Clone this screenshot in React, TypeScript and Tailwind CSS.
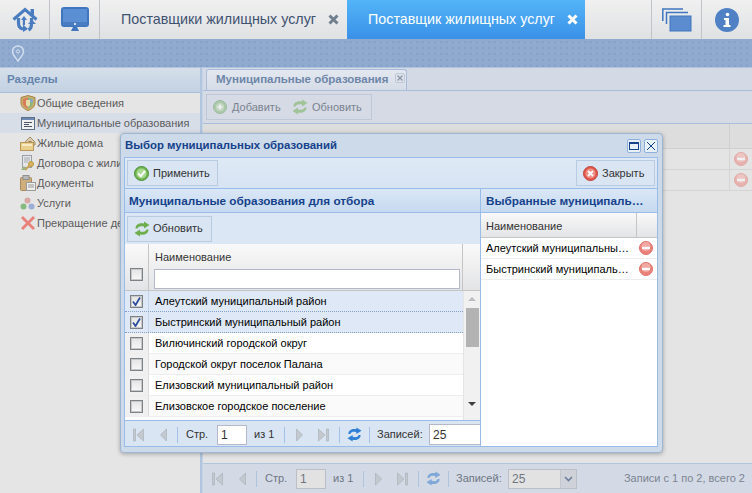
import type { ReactNode } from "react";

const FONT = "font-['Liberation_Sans',sans-serif]";

function HomeIcon() {
  return (
    <svg width="26" height="25" viewBox="0 0 26 25" fill="none">
      <path d="M1.5 12.5 L13 2.5 L24.5 12.5" stroke="#4a7cc0" strokeWidth="3" />
      <path d="M18.5 6 V2 H22 V9 Z" fill="#4a7cc0" />
      <path d="M6.5 11 V16 C6.5 19.5 8 21.5 11 22" stroke="#4a7cc0" strokeWidth="3.2" />
      <path d="M11 17.5 L16 22 L11 25 Z" fill="#4a7cc0" />
      <path d="M19.5 11 V17 C19.5 20 18.5 22 16.5 23" stroke="#4a7cc0" strokeWidth="3.2" />
      <path d="M15 13 L12 9 L9 13 H10.8 V18 H13 V13 Z" fill="#4a7cc0" />
      <path d="M16 17 L20 13 L24 17 Z" fill="#4a7cc0" />
    </svg>
  );
}

function MonitorIcon() {
  return (
    <svg width="28" height="25" viewBox="0 0 28 25">
      <rect x="1" y="1" width="26" height="18" rx="2" fill="#fff" stroke="#3f76bf" strokeWidth="2" />
      <rect x="2" y="2" width="24" height="13" fill="#5a8fd4" />
      <rect x="2" y="15" width="24" height="3.5" fill="#4a7cc0" />
      <circle cx="14" cy="17" r="1" fill="#fff" />
      <path d="M10 24 L12 20 H16 L18 24 Z" fill="#3f76bf" />
    </svg>
  );
}

function StackIcon() {
  return (
    <svg width="30" height="24" viewBox="0 0 30 24" fill="none">
      <path d="M0.8 13 V1 H21" stroke="#3f76bf" strokeWidth="1.5" />
      <path d="M4.5 16 V4.5 H26" stroke="#3f76bf" strokeWidth="1.5" />
      <rect x="8" y="8" width="21" height="15" fill="#5b8ccf" stroke="#3f76bf" />
    </svg>
  );
}

function InfoIcon() {
  return (
    <svg width="24" height="24" viewBox="0 0 24 24">
      <circle cx="12" cy="12" r="12" fill="#4f81c4" />
      <circle cx="12.5" cy="6.5" r="1.8" fill="#fff" />
      <path d="M9 10 H14 V17 H15.5 V19 H8.5 V17 H10.5 V12 H9 Z" fill="#fff" />
    </svg>
  );
}

function PinIcon() {
  return (
    <svg width="14" height="17" viewBox="0 0 14 17" fill="none">
      <path d="M7 16 C4 12 1.5 9.5 1.5 6.5 A5.5 5.5 0 0 1 12.5 6.5 C12.5 9.5 10 12 7 16 Z" stroke="#d3dfee" strokeWidth="1.5" />
      <circle cx="7" cy="6.5" r="1.6" stroke="#d3dfee" />
    </svg>
  );
}

function TabCross({ color }: { color: string }) {
  return (
    <svg width="11" height="11" viewBox="0 0 11 11" fill="none">
      <path d="M1.5 1.5 L9.5 9.5 M9.5 1.5 L1.5 9.5" stroke={color} strokeWidth="3" />
    </svg>
  );
}

function ShieldIcon() {
  return (
    <svg width="16" height="16" viewBox="0 0 16 16">
      <path d="M8 0.5 L15 2.5 V8 C15 12 11 14.5 8 15.5 C5 14.5 1 12 1 8 V2.5 Z" fill="#c9b06a" stroke="#a5824a" />
      <path d="M8 2.5 V13.5 C5.5 12.5 3 11 3 8 V4 Z" fill="#d97a5a" />
      <path d="M8 2.5 L13 4 V8 C13 11 10.5 12.5 8 13.5 Z" fill="#8fb37f" />
      <path d="M6 5 H10 V10 L8 12 L6 10 Z" fill="#e4dfa8" />
      <path d="M10 4 L13 4.5 V7 L10 7 Z" fill="#8aa5cf" />
    </svg>
  );
}

function ListIcon() {
  return (
    <svg width="14" height="13" viewBox="0 0 14 13" fill="none">
      <rect x="0.5" y="0.5" width="13" height="12" fill="#f0f0f0" stroke="#5f6f86" />
      <rect x="1" y="1" width="12" height="2" fill="#6d89b3" />
      <path d="M3 5.5 H11 M3 7.5 H8 M3 9.5 H11" stroke="#4b5563" />
    </svg>
  );
}

function HouseFolderIcon() {
  return (
    <svg width="16" height="15" viewBox="0 0 16 15">
      <path d="M5 6 L10 1 L15 6 V9 H5 Z" fill="#d8cdb4" stroke="#a98f5e" />
      <rect x="8.5" y="5" width="3" height="4" fill="#a07f56" />
      <rect x="0.5" y="6.5" width="13" height="8" fill="#e9d08c" stroke="#b9975a" />
      <rect x="2" y="8" width="10" height="2" fill="#f6ebc4" />
    </svg>
  );
}

function ContractIcon() {
  return (
    <svg width="16" height="16" viewBox="0 0 16 16">
      <rect x="2.5" y="0.5" width="9" height="12" fill="#e6e6e6" stroke="#9aa0aa" />
      <path d="M4 3 H10 M4 5 H10 M4 7 H8" stroke="#a3a9b3" />
      <circle cx="11" cy="9" r="2.5" fill="#d9b65e" stroke="#b9974a" />
      <path d="M10 10 L5 15" stroke="#c9a552" strokeWidth="2" />
      <path d="M1 15 L4 11 L6 15 Z" fill="#9bb57f" />
    </svg>
  );
}

function ClipboardIcon() {
  return (
    <svg width="16" height="16" viewBox="0 0 16 16">
      <rect x="0.5" y="2.5" width="11" height="13" rx="1" fill="#cfae7c" stroke="#a98a5a" />
      <rect x="3" y="0.5" width="6" height="4" fill="#b9b9b9" stroke="#8f8f8f" />
      <rect x="6.5" y="7.5" width="9" height="8" fill="#eeeeee" stroke="#9a9a9a" />
      <path d="M8 10 H14 M8 12 H14" stroke="#9a9a9a" />
    </svg>
  );
}

function ServicesIcon() {
  return (
    <svg width="15" height="13" viewBox="0 0 15 13">
      <circle cx="7.5" cy="3.5" r="3" fill="#d9a8a4" />
      <circle cx="3.5" cy="9.5" r="3" fill="#86bb80" />
      <circle cx="11.5" cy="9.5" r="3" fill="#9daed6" />
    </svg>
  );
}

function CrossIcon() {
  return (
    <svg width="14" height="14" viewBox="0 0 14 14">
      <path d="M2 0 L7 5 L12 0 L14 2 L9 7 L14 12 L12 14 L7 9 L2 14 L0 12 L5 7 L0 2 Z" fill="#e8817a" />
    </svg>
  );
}

function AddIcon() {
  return (
    <svg width="14" height="14" viewBox="0 0 14 14" className="opacity-60">
      <circle cx="7" cy="7" r="6.5" fill="#8fbf83" stroke="#7ba572" />
      <circle cx="7" cy="7" r="4" fill="#b9d6ae" />
      <path d="M4.5 7 H9.5 M7 4.5 V9.5" stroke="#fff" strokeWidth="1.6" />
    </svg>
  );
}

function RefreshIcon({ faded }: { faded?: boolean }) {
  return (
    <svg width="16" height="16" viewBox="0 0 16 16" className={faded ? "opacity-50" : ""} fill="#6fae4f">
      <path d="M1.5 7.5 C1.5 3 6 1.5 10 2.5 V0.5 L15.5 4 L10 7.5 V5.5 C7 4.8 4.5 5 3.5 7.5 Z" />
      <path d="M14.5 8.5 C14.5 13 10 14.5 6 13.5 V15.5 L0.5 12 L6 8.5 V10.5 C9 11.2 11.5 11 12.5 8.5 Z" />
    </svg>
  );
}

function ApplyIcon() {
  return (
    <svg width="15" height="15" viewBox="0 0 15 15">
      <circle cx="7.5" cy="7.5" r="7" fill="#6fb552" stroke="#4f8f3a" />
      <circle cx="7.5" cy="7.5" r="5" fill="#a8d98f" />
      <path d="M4.2 7.5 L6.8 10 L11 5" fill="none" stroke="#fff" strokeWidth="2" />
    </svg>
  );
}

function CloseRoundIcon() {
  return (
    <svg width="15" height="15" viewBox="0 0 15 15">
      <circle cx="7.5" cy="7.5" r="7" fill="#e2574c" stroke="#c0443a" />
      <circle cx="7.5" cy="7.5" r="5" fill="#ef8f85" />
      <path d="M5 5 L10 10 M10 5 L5 10" stroke="#fff" strokeWidth="1.8" />
    </svg>
  );
}

function RemoveIcon({ faded }: { faded?: boolean }) {
  return (
    <svg width="14" height="14" viewBox="0 0 14 14" className={faded ? "opacity-50" : ""}>
      <circle cx="7" cy="7" r="6.5" fill="#e98079" stroke="#e0716a" />
      <circle cx="7" cy="5.5" r="4.5" fill="#f3a9a3" />
      <rect x="3" y="5.8" width="8" height="2.4" fill="#fff" />
    </svg>
  );
}

function CheckBox({ checked }: { checked?: boolean }) {
  return (
    <span className="flex h-[13px] w-[13px] items-center justify-center border border-[#7d8286] bg-[linear-gradient(#e4e4e4,#f8f8f8)] outline outline-1 -outline-offset-2 outline-[#c8c8c8]">
      {checked && (
        <svg width="11" height="11" viewBox="0 0 11 11" fill="none">
          <path d="M2 5.5 L4.5 9 L9 1.5" stroke="#2f4f9f" strokeWidth="1.8" />
        </svg>
      )}
    </span>
  );
}

function PagerGlyph({ kind }: { kind: "first" | "prev" | "next" | "last" }) {
  const wide = kind === "first" || kind === "last";
  const paths = {
    first: "M0.5 1 H2.5 V13 H0.5 Z M10.5 1 L4 7 L10.5 13 Z",
    prev: "M6.5 1 L0.5 7 L6.5 13 Z",
    next: "M0.5 1 L6.5 7 L0.5 13 Z",
    last: "M0.5 1 L7 7 L0.5 13 Z M8.5 1 H10.5 V13 H8.5 Z",
  };
  return (
    <svg width={wide ? 11 : 7} height="14" viewBox={`0 0 ${wide ? 11 : 7} 14`} className="shrink-0">
      <path d={paths[kind]} fill="#c4c9cf" stroke="#a4abb3" strokeWidth="0.6" />
    </svg>
  );
}

function Sep({ color }: { color: string }) {
  return <span className={`h-[16px] w-px shrink-0 ${color}`} />;
}

function Pager({ faded, children }: { faded?: boolean; children: ReactNode }) {
  const sep = faded ? "bg-[#aec3de]" : "bg-[#a3c0e6]";
  const text = faded ? "text-[#6e7682]" : "text-[#333]";
  const field = faded ? "bg-[#e2e2e2] border-[#bcc0c6]" : "bg-white border-[#b5b8c8]";
  return (
    <div className={`flex h-full items-center text-[11px] ${faded ? "pl-[9px]" : "pl-[8px]"} ${text}`}>
      <PagerGlyph kind="first" />
      <span className="w-[16px] shrink-0" />
      <PagerGlyph kind="prev" />
      <span className="w-[10px] shrink-0" />
      <Sep color={sep} />
      <span className="ml-[8px] w-[31px] shrink-0">Стр.</span>
      <span className={`flex h-[20px] w-[30px] shrink-0 items-center border pl-[3px] text-[12px] ${field}`}>1</span>
      <span className="ml-[7px] w-[30px] shrink-0">из 1</span>
      <Sep color={sep} />
      <span className="w-[11px] shrink-0" />
      <PagerGlyph kind="next" />
      <span className="w-[15px] shrink-0" />
      <PagerGlyph kind="last" />
      <span className="w-[10px] shrink-0" />
      <Sep color={sep} />
      <span className="w-[7px] shrink-0" />
      <svg width="15" height="15" viewBox="0 0 16 16" fill={faded ? "#7fa8d8" : "#2f7fd6"} className="shrink-0">
        <path d="M1.5 7.5 C1.5 3 6 1.5 10 2.5 V0.5 L15.5 4 L10 7.5 V5.5 C7 4.8 4.5 5 3.5 7.5 Z" />
        <path d="M14.5 8.5 C14.5 13 10 14.5 6 13.5 V15.5 L0.5 12 L6 8.5 V10.5 C9 11.2 11.5 11 12.5 8.5 Z" />
      </svg>
      <span className="w-[7px] shrink-0" />
      <Sep color={sep} />
      <span className="ml-[7px] w-[52px] shrink-0 whitespace-nowrap">Записей:</span>
      {children}
    </div>
  );
}

function TopCell({ children, w }: { children: ReactNode; w: string }) {
  return (
    <div className={`flex h-full items-center justify-center border-r border-[#c0c4c9] ${w}`}>{children}</div>
  );
}

function ToolButton({ icon, label, w }: { icon: ReactNode; label: string; w: string }) {
  return (
    <div className={`flex h-[26px] items-center gap-[3px] border border-[#b9cbe0] bg-[#d9e5f3] pl-[6px] text-[11px] text-[#333] ${w}`}>
      {icon}
      {label}
    </div>
  );
}

const SECTIONS = [
  { icon: <ShieldIcon />, label: "Общие сведения" },
  { icon: <ListIcon />, label: "Муниципальные образования", active: true },
  { icon: <HouseFolderIcon />, label: "Жилые дома" },
  { icon: <ContractIcon />, label: "Договора с жилищными" },
  { icon: <ClipboardIcon />, label: "Документы" },
  { icon: <ServicesIcon />, label: "Услуги" },
  { icon: <CrossIcon />, label: "Прекращение деятельности" },
];

const RECORDS = [
  { name: "Алеутский муниципальный район", checked: true },
  { name: "Быстринский муниципальный район", checked: true },
  { name: "Вилючинский городской округ" },
  { name: "Городской округ поселок Палана" },
  { name: "Елизовский муниципальный район" },
  { name: "Елизовское городское поселение" },
];

function PickerWindow() {
  return (
    <div className="absolute left-[120px] top-[133px] flex h-[320px] w-[543px] flex-col rounded-[4px] border border-[#9fb6d3] bg-[#cddaea] pb-[5px] pl-[3px] pr-[4px] shadow-[0_1px_4px_rgba(60,60,60,0.4)]">
      <div className="flex h-[23px] shrink-0 items-center justify-between">
        <span className="pl-[1px] text-[11.4px] font-bold text-[#15428b]">Выбор муниципальных образований</span>
        <div className="flex gap-[3px]">
          <span className="flex h-[14px] w-[14px] items-center justify-center rounded-[2px] border border-[#8fb0dc] bg-[#e8f0fa]">
            <span className="h-[8px] w-[10px] border border-t-2 border-[#15428b]" />
          </span>
          <span className="flex h-[14px] w-[14px] items-center justify-center rounded-[2px] border border-[#8fb0dc] bg-[#e8f0fa]">
            <svg width="10" height="10" viewBox="0 0 10 10" fill="none">
              <path d="M1 1 L9 9 M9 1 L1 9" stroke="#15428b" />
            </svg>
          </span>
        </div>
      </div>
      <div className="flex min-h-0 flex-1 flex-col border border-[#99bce8] bg-[#dce7f5]">
        <div className="flex h-[31px] shrink-0 items-center justify-between border-b border-[#99bce8] bg-[linear-gradient(#dfe9f6,#d6e3f2)] pl-[2px] pr-[2px]">
          <ToolButton icon={<ApplyIcon />} label="Применить" w="w-[91px] !gap-[4px]" />
          <ToolButton icon={<CloseRoundIcon />} label="Закрыть" w="w-[79px] !gap-[4px]" />
        </div>
        <div className="flex min-h-0 flex-1">
          <div className="flex w-[355px] shrink-0 flex-col overflow-hidden">
            <div className="flex h-[24px] shrink-0 items-center border-b border-[#99bce8] bg-[linear-gradient(#dae7f6_0%,#d0e0f3_50%,#c6d9f0_100%)] pl-[4px] text-[11.75px] font-bold text-[#15428b]">
              Муниципальные образования для отбора
            </div>
            <div className="flex h-[31px] shrink-0 items-center bg-[#dce7f5] px-[2px]">
              <ToolButton icon={<RefreshIcon />} label="Обновить" w="w-[85px] pl-[5px]" />
            </div>
            <div className="flex h-[47px] shrink-0 border-b border-[#c5c5c5] bg-[linear-gradient(#f9f9f9,#e3e4e6)]">
              <div className="flex w-[24px] items-end justify-center border-r border-[#c5c5c5] pb-[9px]">
                <CheckBox />
              </div>
              <div className="flex flex-1 flex-col border-r border-[#c5c5c5] pl-[6px] pr-[2px]">
                <span className="flex h-[25px] items-center pt-[2px] text-[11px] text-[#333]">Наименование</span>
                <span className="-ml-[1px] h-[20px] border border-[#b5b8c8] bg-white" />
              </div>
              <div className="w-[17px]" />
            </div>
            <div className="flex h-[129px] shrink-0 bg-white">
              <div className="min-w-0 flex-1">
                {RECORDS.map((row, i) => (
                  <div
                    key={row.name}
                    className={`flex h-[21px] items-center border-b text-[11px] text-black ${
                      row.checked
                        ? "border-dotted border-[#84a0c4] bg-[#dfe8f6]"
                        : `border-[#ededed] ${i % 2 ? "bg-[#fafafa]" : "bg-white"}`
                    }`}
                  >
                    <span className={`flex h-full w-[24px] items-center justify-center border-r ${row.checked ? "border-[#c3d5ec]" : "border-[#dcdcdc] bg-[#f0f0f0]"}`}>
                      <CheckBox checked={row.checked} />
                    </span>
                    <span className="pl-[6px]">{row.name}</span>
                  </div>
                ))}
              </div>
              <div className="flex w-[17px] flex-col items-center border-l border-[#e4e4e4] bg-[#f1f1f1]">
                <span className="mt-[6px] h-0 w-0 border-x-[4px] border-b-[4px] border-x-transparent border-b-[#b9bcc0]" />
                <span className="mt-[7px] h-[39px] w-[13px] bg-[#b3b3b3]" />
                <span className="mt-[55px] h-0 w-0 border-x-[4px] border-t-[4px] border-x-transparent border-t-[#3f3f3f]" />
              </div>
            </div>
            <div className="h-[28px] shrink-0 border-t border-[#99bce8] bg-[#d9e5f3]">
              <Pager>
                <span className="flex h-[21px] w-[60px] shrink-0 items-center border border-[#b5b8c8] bg-white pl-[3px] text-[12px] text-[#333]">25</span>
              </Pager>
            </div>
          </div>
          <div className="flex min-w-0 flex-1 flex-col border-l border-[#99bce8] bg-white">
            <div className="flex h-[24px] shrink-0 items-center border-b border-[#99bce8] bg-[linear-gradient(#dae7f6_0%,#d0e0f3_50%,#c6d9f0_100%)] pl-[5px] text-[11.75px] font-bold text-[#15428b]">
              <span className="w-[160px] truncate">Выбранные муниципальные</span>
            </div>
            <div className="flex h-[25px] shrink-0 border-b border-[#c5c5c5] bg-[linear-gradient(#f9f9f9,#e3e4e6)] text-[11px] text-[#333]">
              <span className="flex flex-1 items-center border-r border-[#c5c5c5] pl-[5px] pt-[2px]">Наименование</span>
              <span className="w-[20px]" />
            </div>
            {["Алеутский муниципальный район", "Быстринский муниципальный район"].map((name) => (
              <div key={name} className="flex h-[21px] shrink-0 items-center border-b border-[#ededed] text-[11px] text-black">
                <span className="min-w-0 flex-1 truncate pl-[5px] pr-[5px]">{name}</span>
                <span className="flex w-[22px] justify-center">
                  <RemoveIcon />
                </span>
              </div>
            ))}
          </div>
        </div>
      </div>
    </div>
  );
}

export default function App() {
  return (
    <div className={`relative flex h-[493px] w-[752px] flex-col overflow-hidden bg-[#e4e4e4] ${FONT}`}>
      <header className="flex h-[39px] shrink-0 items-stretch bg-[linear-gradient(#f0f0f0,#dfe1e3)] shadow-[0_1px_2px_rgba(50,60,80,0.6)]">
        <TopCell w="w-[50px]">
          <HomeIcon />
        </TopCell>
        <TopCell w="w-[50px]">
          <MonitorIcon />
        </TopCell>
        <div className="flex w-[247px] items-center pl-[21px] text-[14.3px] text-[#3f5270]">
          <span className="w-[207px] whitespace-nowrap">Поставщики жилищных услуг</span>
          <TabCross color="#70808f" />
        </div>
        <div className="flex w-[238px] items-center bg-[linear-gradient(#53b4f8,#3a91e8)] pl-[21px] text-[14.3px] text-white">
          <span className="w-[199px] whitespace-nowrap">Поставщик жилищных услуг</span>
          <TabCross color="#ffffff" />
        </div>
        <div className="flex-1 border-r border-[#c0c4c9]" />
        <TopCell w="w-[50px]">
          <StackIcon />
        </TopCell>
        <div className="flex w-[50px] items-center justify-center">
          <InfoIcon />
        </div>
      </header>

      <div className="flex h-[28px] shrink-0 items-center bg-[#8fa9cf] bg-[radial-gradient(#86a1c9_1px,transparent_1px)] bg-[length:6px_6px] pl-[11px]">
        <PinIcon />
      </div>

      <div className="flex min-h-0 flex-1 border-t border-[#b0c4de] bg-[#c5d5e8]">
        <aside className="w-[201px] shrink-0 overflow-hidden border-r border-[#b2c5de] bg-[#e5e5e5]">
          <div className="flex h-[25px] items-center border-b border-[#a8bfdc] bg-[linear-gradient(#d4dfea,#c3d1e2)] pl-[7px] text-[11.5px] font-bold text-[#6584ad]">
            Разделы
          </div>
          {SECTIONS.map((item) => (
            <div
              key={item.label}
              className={`flex h-[20px] items-center whitespace-nowrap pl-[19px] text-[11px] text-[#5b5b5b] ${item.active ? "bg-[#d8dee8]" : ""}`}
            >
              <span className="flex w-[17px] shrink-0 justify-center">{item.icon}</span>
              <span className="pl-[1px]">{item.label}</span>
            </div>
          ))}
        </aside>

        <main className="flex min-w-0 flex-1 flex-col border-l border-[#b2c5de] pl-[1px]">
          <div className="flex h-[23px] shrink-0 items-end border-b border-[#a9bddb] bg-[#d3dae6] pl-[3px]">
            <div className="flex h-[21px] w-[201px] items-center justify-between whitespace-nowrap rounded-t-[3px] border border-b-0 border-[#a9bddb] bg-[linear-gradient(#e3e8f0,#d6dce7)] pl-[9px] pr-[1px] text-[11.5px] font-bold text-[#6e86a8]">
              Муниципальные образования
              <span className="mb-[5px] flex h-[10px] w-[10px] items-center justify-center rounded-[2px] border border-[#c0c8d6]">
                <svg width="6" height="6" viewBox="0 0 6 6" fill="none">
                  <path d="M0.5 0.5 L5.5 5.5 M5.5 0.5 L0.5 5.5" stroke="#8d97a6" strokeWidth="1.4" />
                </svg>
              </span>
            </div>
          </div>
          <div className="flex h-[33px] shrink-0 items-center border-b border-[#a9bddb] bg-[#d5dae4] px-[3px]">
            <div className="flex h-[26px] w-[166px] items-center border border-[#bfc8d6] pl-[6px] text-[11px] text-[#7a8290]">
              <AddIcon />
              <span className="ml-[5px] w-[60px]">Добавить</span>
              <RefreshIcon faded />
              <span className="ml-[4px]">Обновить</span>
            </div>
          </div>
          <div className="min-h-0 flex-1 bg-[#e4e4e4]">
            <div className="flex h-[25px] justify-end border-b border-[#cfcfcf] bg-[#dddddd]">
              <span className="w-[23px] border-l border-[#cfcfcf]" />
            </div>
            {[0, 1].map((row) => (
              <div key={row} className="flex h-[21px] justify-end border-b border-[#d4d4d4]">
                <span className="flex w-[23px] items-center justify-center border-l border-[#d4d4d4]">
                  <RemoveIcon faded />
                </span>
              </div>
            ))}
          </div>
          <div className="flex h-[30px] shrink-0 items-center justify-between border-t border-[#b2c5de] bg-[#d3dae6] pr-[7px]">
            <Pager faded>
              <span className="flex h-[20px] w-[69px] shrink-0 items-center justify-between border border-[#bcc0c6] bg-[#e2e2e2] pl-[3px] text-[12px] text-[#6e7682]">
                25
                <span className="flex h-full w-[16px] items-center justify-center border-l border-[#c4c8ce] bg-[#cfd3d9]">
                  <svg width="9" height="6" viewBox="0 0 9 6" fill="none">
                    <path d="M1 1 L4.5 4.5 L8 1" stroke="#6b7f9c" strokeWidth="1.6" />
                  </svg>
                </span>
              </span>
            </Pager>
            <span className="text-[11px] text-[#7b8490]">Записи с 1 по 2, всего 2</span>
          </div>
        </main>
      </div>

      <PickerWindow />
    </div>
  );
}
